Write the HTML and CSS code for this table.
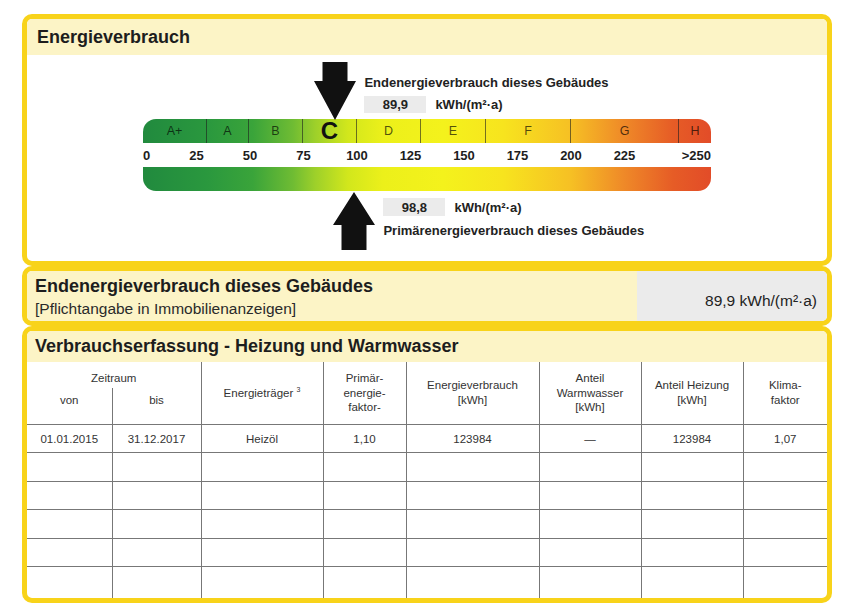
FILE: index.html
```html
<!DOCTYPE html>
<html lang="de">
<head>
<meta charset="utf-8">
<title>Energieverbrauch</title>
<link rel="stylesheet" href="styles.css">
</head>
<body>
<div class="page">
  <section class="panel">
    <div class="panel-head head-main"><h2 class="title">Energieverbrauch</h2></div>
    <div class="energy-body">
      <div class="scale">
        <div class="marker marker-top">
          <svg class="arrow" style="margin-left: calc(89.9 * 2.14px - 22px)" width="44" height="58" viewBox="0 0 44 58"><path d="M9.5 0 H34.5 V19 H43 L22 58 L1 19 H9.5 Z" fill="#111"/></svg>
          <div class="marker-text">
            <div class="marker-label">Endenergieverbrauch dieses Gebäudes</div>
            <div class="value-row value-row-top"><span class="value-box">89,9</span><span class="unit">kWh/(m²·a)</span></div>
          </div>
        </div>
        <div class="bar bar-top">
          <div class="cell w-ap">A+</div>
          <div class="cell w-a">A</div>
          <div class="cell w-b">B</div>
          <div class="cell w-c cell-current">C</div>
          <div class="cell w-d">D</div>
          <div class="cell w-e">E</div>
          <div class="cell w-f">F</div>
          <div class="cell w-g">G</div>
          <div class="cell w-h">H</div>
        </div>
        <div class="ticks">
          <span class="tick-first">0</span>
          <span class="tick">25</span>
          <span class="tick">50</span>
          <span class="tick">75</span>
          <span class="tick">100</span>
          <span class="tick">125</span>
          <span class="tick">150</span>
          <span class="tick">175</span>
          <span class="tick">200</span>
          <span class="tick">225</span>
          <span class="tick-last">&gt;250</span>
        </div>
        <div class="bar bar-bottom"></div>
        <div class="marker marker-bottom">
          <svg class="arrow" style="margin-left: calc(98.8 * 2.14px - 22px)" width="44" height="58" viewBox="0 0 44 58"><path d="M22 0 L43 33 H34.5 V58 H9.5 V33 H1 Z" fill="#111"/></svg>
          <div class="marker-text marker-text-bottom">
            <div class="value-row"><span class="value-box">98,8</span><span class="unit">kWh/(m²·a)</span></div>
            <div class="marker-label label-bottom">Primärenergieverbrauch dieses Gebäudes</div>
          </div>
        </div>
      </div>
    </div>
  </section>

  <section class="panel panel-summary">
    <div class="summary-left">
      <h2 class="title title-summary">Endenergieverbrauch dieses Gebäudes</h2>
      <div class="subtitle">[Pflichtangabe in Immobilienanzeigen]</div>
    </div>
    <div class="summary-right">89,9 kWh/(m²·a)</div>
  </section>

  <section class="panel">
    <div class="panel-head head-table"><h2 class="title title-table">Verbrauchserfassung - Heizung und Warmwasser</h2></div>
    <table class="usage">
      <colgroup>
        <col class="c1"><col class="c2"><col class="c3"><col class="c4"><col class="c5"><col class="c6"><col class="c7"><col class="c8">
      </colgroup>
      <tr class="hr1">
        <td colspan="2" class="zeitraum">Zeitraum</td>
        <td rowspan="2">Energieträger <sup>3</sup></td>
        <td rowspan="2">Primär-<br>energie-<br>faktor-</td>
        <td rowspan="2">Energieverbrauch<br>[kWh]</td>
        <td rowspan="2">Anteil<br>Warmwasser<br>[kWh]</td>
        <td rowspan="2">Anteil Heizung<br>[kWh]</td>
        <td rowspan="2">Klima-<br>faktor</td>
      </tr>
      <tr class="hr2">
        <td class="sub">von</td>
        <td class="sub">bis</td>
      </tr>
      <tr class="row">
        <td>01.01.2015</td><td>31.12.2017</td><td>Heizöl</td><td>1,10</td><td>123984</td><td>—</td><td>123984</td><td>1,07</td>
      </tr>
      <tr class="row"><td></td><td></td><td></td><td></td><td></td><td></td><td></td><td></td></tr>
      <tr class="row"><td></td><td></td><td></td><td></td><td></td><td></td><td></td><td></td></tr>
      <tr class="row"><td></td><td></td><td></td><td></td><td></td><td></td><td></td><td></td></tr>
      <tr class="row"><td></td><td></td><td></td><td></td><td></td><td></td><td></td><td></td></tr>
      <tr class="row row-last"><td></td><td></td><td></td><td></td><td></td><td></td><td></td><td></td></tr>
    </table>
  </section>
</div>
</body>
</html>
```

FILE: styles.css
```css
* { box-sizing: border-box; }

body {
  margin: 0;
  background: #ffffff;
  font-family: "Liberation Sans", Arial, sans-serif;
  color: #222222;
}

.page {
  padding: 14px 0 0 22px;
  width: 832px;
}

.panel {
  width: 810px;
  border: 5px solid #f8d31a;
  border-radius: 10px;
  background: #ffffff;
  overflow: hidden;
}

.panel-head {
  background: #fcf4c6;
}

.title {
  margin: 0;
  font-size: 18px;
  font-weight: bold;
  color: #1d1d1d;
  white-space: nowrap;
}

.head-main {
  height: 36px;
  padding-left: 10px;
}
.head-main .title { line-height: 36px; }

/* ---------- scale ---------- */
.energy-body {
  height: 206px;
  padding-top: 7px;
}

.scale {
  margin-left: 116px;
  width: 568px;
}

.marker {
  display: flex;
  height: 58px;
}

.marker-top { margin-bottom: -1px; position: relative; z-index: 1; }
.marker-bottom { margin-top: 1px; }

.arrow {
  flex: none;
  display: block;
}

.marker-text {
  flex: none;
  margin-left: 7px;
  padding-top: 13px;
  white-space: nowrap;
  font-weight: bold;
  font-size: 13px;
  color: #222;
}

.marker-text-bottom { padding-top: 6px; }

.marker-label { line-height: 16px; }
.label-bottom { margin-top: 7px; }

.value-row {
  display: flex;
  align-items: center;
  height: 18px;
}
.value-row-top { margin-top: 5px; height: 17px; }

.value-box {
  width: 62px;
  height: 100%;
  background: #ebebeb;
  display: flex;
  align-items: center;
  justify-content: center;
}

.unit { margin-left: 9px; }

.bar {
  height: 24px;
  width: 568px;
  background: linear-gradient(to right,
    #218a3e 0px, #2a983e 64px, #3aa43a 110px, #6fbc33 150px,
    #9dd02a 172px, #d2e71c 205px, #ecf01a 240px, #f4f21c 300px,
    #f7e41e 360px, #f6c024 428px, #ef8a28 480px, #e65c26 530px,
    #e24c28 568px);
}

.bar-top {
  display: flex;
  border-radius: 13px 13px 0 0;
}

.bar-bottom {
  border-radius: 0 0 13px 13px;
}

.cell {
  height: 100%;
  display: flex;
  align-items: center;
  justify-content: center;
  font-size: 12.5px;
  color: rgba(0, 0, 0, 0.68);
  border-right: 1px solid rgba(30, 30, 30, 0.6);
}

.w-ap { width: 64px; }
.w-a { width: 42px; }
.w-b { width: 54px; }
.w-c { width: 54px; }
.w-d { width: 64px; }
.w-e { width: 65px; }
.w-f { width: 85px; }
.w-g { width: 108px; }
.w-h { width: 32px; border-right: none; }

.cell-current {
  font-size: 24px;
  font-weight: bold;
  color: #111;
  line-height: 24px;
}

.ticks {
  display: flex;
  height: 24px;
  align-items: center;
  font-size: 13px;
  font-weight: bold;
  color: #1d1d1d;
}

.tick-first { width: 26.75px; text-align: left; }
.tick { width: 53.5px; text-align: center; }
.tick-last { flex: 1; text-align: right; }

/* ---------- summary ---------- */
.panel-summary {
  display: flex;
  height: 60px;
}

.summary-left {
  flex: 1;
  background: #fcf4c6;
  padding: 3px 0 0 8px;
}

.title-summary { line-height: 24px; }

.subtitle {
  font-size: 15.5px;
  line-height: 22px;
  color: #2a2a2a;
  white-space: nowrap;
}

.summary-right {
  width: 190px;
  background: #ebebeb;
  text-align: right;
  padding: 21px 10px 0 0;
  font-size: 15.5px;
  line-height: 18px;
  color: #222;
  white-space: nowrap;
}

/* ---------- table ---------- */
.head-table {
  height: 31px;
  padding-left: 8px;
}
.head-table .title { line-height: 31px; }

.usage {
  width: 800px;
  table-layout: fixed;
  border-collapse: collapse;
  border-style: hidden;
  font-size: 11.5px;
  color: #333;
}

.c1 { width: 85px; }
.c2 { width: 89px; }
.c3 { width: 122px; }
.c4 { width: 83px; }
.c5 { width: 133px; }
.c6 { width: 102px; }
.c7 { width: 102px; }
.c8 { width: 84px; }

.usage td {
  border: 1px solid #777;
  text-align: center;
  vertical-align: middle;
  padding: 0;
  line-height: 14.5px;
}

.usage sup {
  font-size: 7px;
  vertical-align: 5px;
  line-height: 0;
}

.hr1 { height: 26px; }
.hr2 { height: 36px; }

.usage .zeitraum {
  border-bottom: none;
  vertical-align: bottom;
  padding-bottom: 3px;
}

.usage .sub {
  border-top: none;
  vertical-align: top;
  padding-top: 5px;
}

.row { height: 28.5px; }
.row-last { height: 31.5px; }
.usage .row td { padding-top: 1px; }
```
